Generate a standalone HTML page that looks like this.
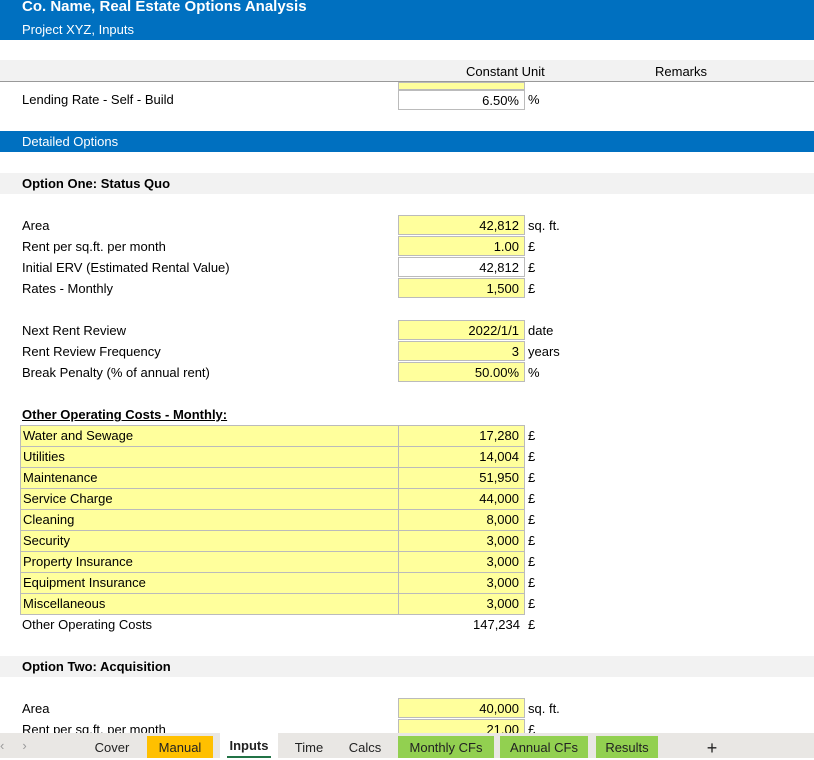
<!DOCTYPE html><html><head><style>
body{margin:0;width:814px;height:758px;overflow:hidden;position:relative;font-family:"Liberation Sans",sans-serif;font-size:13px;color:#000;background:#fff}
.a{position:absolute;white-space:nowrap}
.bar{position:absolute;left:0;width:814px}
.l{position:absolute;left:22px;line-height:21px}
.v{position:absolute;left:398px;width:127px;height:20px;box-sizing:border-box;border:1px solid #bbb;background:#ffff9c;text-align:right;padding-right:5px;line-height:19px}
.u{position:absolute;left:528px;line-height:21px}
.tab{position:absolute;top:736px;height:22px;line-height:24px;font-size:13px;text-align:center;color:#222}
</style></head><body>
<div class="bar" style="top:0;height:40px;background:#0070c0"></div>
<div class="a" style="left:22px;top:-2px;color:#fff;font-weight:bold;font-size:15px">Co. Name, Real Estate Options Analysis</div>
<div class="a" style="left:22px;top:22px;color:#fff;font-size:13px">Project XYZ, Inputs</div>
<div class="bar" style="top:60px;height:21px;background:#f2f2f2;border-bottom:1px solid #999"></div>
<div class="a" style="left:466px;top:64px">Constant Unit</div>
<div class="a" style="left:655px;top:64px">Remarks</div>
<div class="v" style="top:82px;height:8px"></div>
<div class="l" style="top:89px">Lending Rate - Self - Build</div>
<div class="v" style="top:90px;background:#fff">6.50%</div><div class="u" style="top:89px">%</div>
<div class="bar" style="top:131px;height:21px;background:#0070c0"></div>
<div class="l" style="top:131px;color:#fff">Detailed Options</div>
<div class="bar" style="top:173px;height:21px;background:#f2f2f2"></div>
<div class="l" style="top:173px;font-weight:bold">Option One: Status Quo</div>

<div class="l" style="top:215px">Area</div><div class="v" style="top:215px">42,812</div><div class="u" style="top:215px">sq. ft.</div>
<div class="l" style="top:236px">Rent per sq.ft. per month</div><div class="v" style="top:236px">1.00</div><div class="u" style="top:236px">£</div>
<div class="l" style="top:257px">Initial ERV (Estimated Rental Value)</div><div class="v" style="top:257px;background:#fff">42,812</div><div class="u" style="top:257px">£</div>
<div class="l" style="top:278px">Rates - Monthly</div><div class="v" style="top:278px">1,500</div><div class="u" style="top:278px">£</div>

<div class="l" style="top:320px">Next Rent Review</div><div class="v" style="top:320px">2022/1/1</div><div class="u" style="top:320px">date</div>
<div class="l" style="top:341px">Rent Review Frequency</div><div class="v" style="top:341px">3</div><div class="u" style="top:341px">years</div>
<div class="l" style="top:362px">Break Penalty (% of annual rent)</div><div class="v" style="top:362px">50.00%</div><div class="u" style="top:362px">%</div>

<div class="l" style="top:404px;font-weight:bold;text-decoration:underline">Other Operating Costs - Monthly:</div>
<div id="oc"></div>
<div class="l" style="top:614px">Other Operating Costs</div><div class="a" style="left:398px;width:122px;text-align:right;top:614px;line-height:21px">147,234</div><div class="u" style="top:614px">£</div>

<div class="bar" style="top:656px;height:21px;background:#f2f2f2"></div>
<div class="l" style="top:656px;font-weight:bold">Option Two: Acquisition</div>
<div class="l" style="top:698px">Area</div><div class="v" style="top:698px">40,000</div><div class="u" style="top:698px">sq. ft.</div>
<div class="l" style="top:719px">Rent per sq.ft. per month</div><div class="v" style="top:719px">21.00</div><div class="u" style="top:719px">£</div>

<div class="bar" style="top:733px;height:25px;background:#e9e7e4"></div>
<div class="a" style="left:0;top:738px;color:#999">‹&nbsp;&nbsp;&nbsp;&nbsp;&nbsp;›</div>
<div class="tab" style="left:88px;width:48px">Cover</div>
<div class="tab" style="left:147px;width:66px;background:#ffc000">Manual</div>
<div class="tab" style="left:220px;width:58px;top:733px;height:25px;background:#fff;font-weight:bold;line-height:26px">Inputs<div style="position:absolute;left:7px;right:7px;bottom:0;height:2px;background:#217346"></div></div>
<div class="tab" style="left:284px;width:50px">Time</div>
<div class="tab" style="left:340px;width:50px">Calcs</div>
<div class="tab" style="left:398px;width:96px;background:#92d050">Monthly CFs</div>
<div class="tab" style="left:500px;width:88px;background:#92d050">Annual CFs</div>
<div class="tab" style="left:596px;width:62px;background:#92d050">Results</div>
<div class="tab" style="left:700px;width:24px;font-size:18px">+</div>
<script>
var n=[["Water and Sewage","17,280"],["Utilities","14,004"],["Maintenance","51,950"],["Service Charge","44,000"],["Cleaning","8,000"],["Security","3,000"],["Property Insurance","3,000"],["Equipment Insurance","3,000"],["Miscellaneous","3,000"]],h="";
n.forEach(function(r,i){var t=425+i*21;h+='<div class="a" style="left:20px;top:'+t+'px;width:379px;height:22px;box-sizing:border-box;border:1px solid #bbb;background:#ffff9c;padding-left:2px;line-height:20px">'+r[0]+'</div><div class="v" style="top:'+t+'px;height:22px;line-height:20px">'+r[1]+'</div><div class="u" style="top:'+t+'px">£</div>';});
document.getElementById("oc").innerHTML=h;
</script>
</body></html>
